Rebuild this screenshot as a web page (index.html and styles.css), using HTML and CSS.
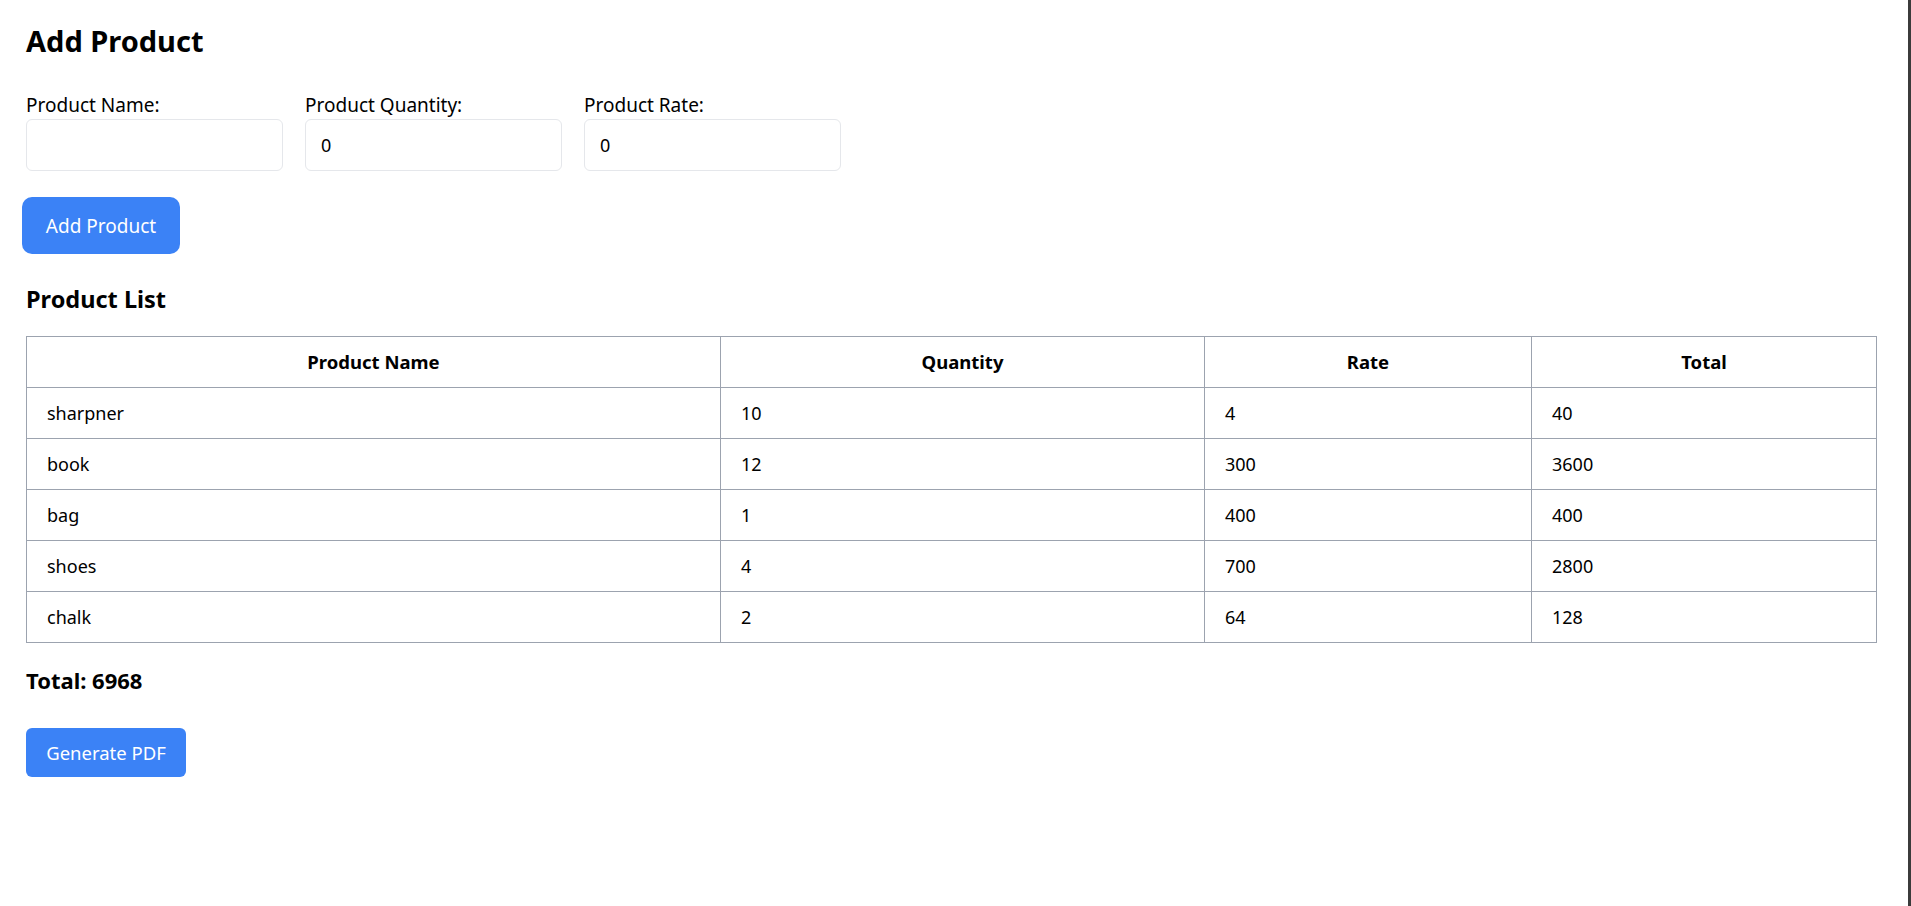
FILE: index.html
```html
<!DOCTYPE html>
<html lang="en">
<head>
<meta charset="utf-8">
<title>Add Product</title>
<link rel="stylesheet" href="styles.css">
</head>
<body>
<div class="page">
  <main class="main">
    <h1 class="title">Add Product</h1>
    <div class="fields">
      <div class="field">
        <label class="label" for="pname">Product Name:</label>
        <input class="input" id="pname" type="text" value="">
      </div>
      <div class="field">
        <label class="label" for="pqty">Product Quantity:</label>
        <input class="input" id="pqty" type="number" value="0">
      </div>
      <div class="field">
        <label class="label" for="prate">Product Rate:</label>
        <input class="input" id="prate" type="number" value="0">
      </div>
    </div>
    <button class="btn btn-add" type="button">Add Product</button>
    <h2 class="subtitle">Product List</h2>
    <table class="table">
      <colgroup>
        <col class="c1"><col class="c2"><col class="c3"><col class="c4">
      </colgroup>
      <thead>
        <tr><th>Product Name</th><th>Quantity</th><th>Rate</th><th>Total</th></tr>
      </thead>
      <tbody>
        <tr><td>sharpner</td><td>10</td><td>4</td><td>40</td></tr>
        <tr><td>book</td><td>12</td><td>300</td><td>3600</td></tr>
        <tr><td>bag</td><td>1</td><td>400</td><td>400</td></tr>
        <tr><td>shoes</td><td>4</td><td>700</td><td>2800</td></tr>
        <tr><td>chalk</td><td>2</td><td>64</td><td>128</td></tr>
      </tbody>
    </table>
    <div class="total">Total: 6968</div>
    <button class="btn btn-pdf" type="button">Generate PDF</button>
  </main>
  <div class="edge"></div>
</div>
</body>
</html>
```

FILE: styles.css
```css
* { box-sizing: border-box; }
html, body { margin: 0; padding: 0; background: #fff; }
body {
  font-family: "Noto Sans", "Open Sans", sans-serif;
  color: #000;
}
.page {
  display: flex;
  min-height: 100vh;
}
.main {
  flex: 1;
  padding: 23px 31px 0 26px;
}
.edge {
  width: 5px;
  background: #3b3b3b;
}
.title {
  margin: 0;
  font-size: 29px;
  line-height: 36px;
  font-weight: 700;
}
.fields {
  display: flex;
  gap: 22px;
  margin-top: 34px;
}
.field {
  display: flex;
  flex-direction: column;
}
.label {
  font-size: 19px;
  line-height: 24px;
  margin-bottom: 2px;
}
.input {
  width: 257px;
  height: 52px;
  border: 1px solid #e5e7eb;
  border-radius: 6px;
  padding: 0 15px;
  font-family: inherit;
  font-size: 18px;
  color: #000;
  background: #fff;
  outline: none;
  -moz-appearance: textfield;
}
.input::-webkit-outer-spin-button,
.input::-webkit-inner-spin-button { -webkit-appearance: none; margin: 0; }
.btn {
  display: block;
  border: none;
  background: #3b82f6;
  color: #fff;
  font-family: inherit;
  cursor: pointer;
}
.btn-add {
  margin: 26px 0 0 -4px;
  width: 158px;
  height: 57px;
  border-radius: 10px;
  font-size: 19px;
}
.subtitle {
  margin: 31px 0 0;
  font-size: 23.5px;
  line-height: 28px;
  font-weight: 700;
}
.table {
  margin-top: 23px;
  width: 1850px;
  border-collapse: collapse;
  table-layout: fixed;
  font-size: 18px;
}
.c1 { width: 694px; }
.c2 { width: 484px; }
.c3 { width: 327px; }
.c4 { width: 345px; }
.table th, .table td {
  border: 1px solid #9ca3af;
  padding: 12px 20px;
  line-height: 26px;
}
.table th {
  text-align: center;
  font-weight: 700;
  font-size: 18.5px;
}
.table td { text-align: left; }
.total {
  margin-top: 23px;
  font-size: 22px;
  line-height: 28px;
  font-weight: 700;
}
.btn-pdf {
  margin-top: 34px;
  width: 160px;
  height: 49px;
  border-radius: 6px;
  font-size: 18.5px;
}
```
